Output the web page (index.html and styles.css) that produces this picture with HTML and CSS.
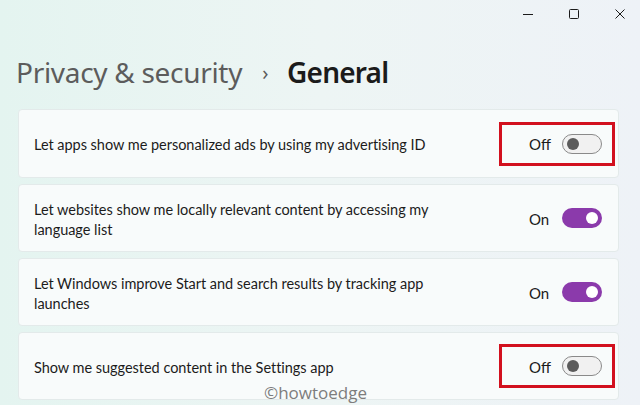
FILE: index.html
```html
<!DOCTYPE html>
<html>
<head>
<meta charset="utf-8">
<link rel="stylesheet" href="styles.css">
</head>
<body>
<div class="window">
  <div class="titlebar">
    <span class="ctl"><svg width="12" height="12" viewBox="0 0 12 12"><path d="M1 6.5h10" stroke="#1b1b1b" stroke-width="1"/></svg></span>
    <span class="ctl"><svg width="12" height="12" viewBox="0 0 12 12"><rect x="1.5" y="1.5" width="9" height="9" rx="1" fill="none" stroke="#1b1b1b" stroke-width="1"/></svg></span>
    <span class="ctl"><svg width="12" height="12" viewBox="0 0 12 12"><path d="M1.5 1.5l9 9M10.5 1.5l-9 9" stroke="#1b1b1b" stroke-width="1"/></svg></span>
  </div>
  <h1 class="crumb"><span class="parent">Privacy &amp; security</span><span class="sep">›</span><span class="current">General</span></h1>
  <div class="list">
    <div class="card">
      <div class="label">Let apps show me personalized ads by using my advertising ID</div>
      <div class="control">
        <span class="state">Off</span><span class="toggle off"><span class="knob"></span></span>
        <span class="highlight"></span>
      </div>
    </div>
    <div class="card">
      <div class="label">Let websites show me locally relevant content by accessing my<br>language list</div>
      <div class="control">
        <span class="state">On</span><span class="toggle on"><span class="knob"></span></span>
      </div>
    </div>
    <div class="card">
      <div class="label">Let Windows improve Start and search results by tracking app<br>launches</div>
      <div class="control">
        <span class="state">On</span><span class="toggle on"><span class="knob"></span></span>
      </div>
    </div>
    <div class="card">
      <div class="label">Show me suggested content in the Settings app</div>
      <div class="control">
        <span class="state">Off</span><span class="toggle off"><span class="knob"></span></span>
        <span class="highlight"></span>
      </div>
    </div>
  </div>
  <div class="watermark">©howtoedge</div>
</div>
</body>
</html>
```
FILE: styles.css
```css
html, body {
  margin: 0;
  padding: 0;
}
body {
  width: 640px;
  height: 405px;
  overflow: hidden;
  font-family: "Noto Sans", "Open Sans", sans-serif;
  color: #1b1b1b;
}
.window {
  position: relative;
  width: 640px;
  height: 405px;
  background: linear-gradient(90deg, #e4f4f0 0%, #edf5f4 50%, #eef2f7 100%);
  box-sizing: border-box;
  padding: 0 21px 0 18px;
}
.titlebar {
  display: flex;
  justify-content: flex-end;
  gap: 34px;
  padding-top: 8px;
  margin-right: -7px;
  height: 26px;
}
.ctl {
  width: 12px;
  height: 12px;
  display: flex;
}
.crumb {
  margin: 16px 0 0 -2px;
  height: 44px;
  font-size: 28px;
  font-weight: 400;
  display: flex;
  align-items: center;
  letter-spacing: -0.3px;
}
.parent { color: #5c5c5c; }
.sep {
  color: #5c5c5c;
  font-size: 20px;
  margin: 0 19px 0 20px;
}
.current {
  color: #1b1b1b;
  font-weight: 600;
  letter-spacing: -0.8px;
}
.list {
  margin-top: 15px;
  display: flex;
  flex-direction: column;
  gap: 6px;
}
.card {
  height: 68px;
  box-sizing: border-box;
  background: #f8fbfb;
  border: 1px solid #e3eaea;
  border-radius: 4px;
  display: flex;
  align-items: center;
  justify-content: space-between;
  padding: 0 16px 0 15px;
}
.card:first-child { height: 69px; }
.label {
  font-family: "Lato", sans-serif;
  font-size: 14.5px;
  line-height: 20px;
  color: #1c1c1c;
  padding-top: 3px;
  letter-spacing: -0.03px;
}
.control {
  position: relative;
  display: flex;
  align-items: center;
}
.state {
  font-family: "Lato", sans-serif;
  font-size: 15px;
  margin-right: 13px;
  width: 20px;
  padding-top: 1px;
}
.toggle {
  width: 40px;
  height: 20px;
  box-sizing: border-box;
  border-radius: 10px;
  position: relative;
  display: block;
}
.toggle.off {
  border: 1px solid #8a8a8a;
  background: #f1f1f1;
}
.toggle.on {
  background: #8b3aab;
}
.knob {
  position: absolute;
  top: 50%;
  width: 12px;
  height: 12px;
  margin-top: -6px;
  border-radius: 50%;
}
.toggle.off .knob {
  left: 4px;
  background: #5b5b5b;
}
.toggle.on .knob {
  right: 4px;
  background: #ffffff;
}
.highlight {
  position: absolute;
  left: -30px;
  right: -13px;
  top: -12px;
  bottom: -12px;
  border: 3px solid #d2101e;
}
.watermark {
  position: absolute;
  left: 264px;
  top: 381px;
  font-family: "Open Sans", sans-serif;
  font-size: 17px;
  color: #7d7d7d;
}
```
